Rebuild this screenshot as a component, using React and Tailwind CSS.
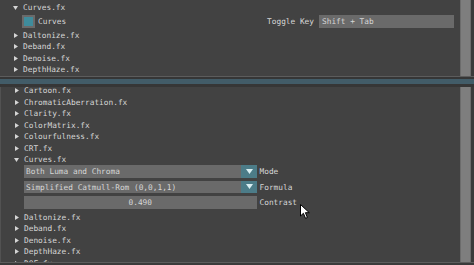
import React from "react";

const font = { fontFamily: '"DejaVu Sans Mono", "Liberation Mono", monospace' };

function Right() {
  return (
    <svg width="4" height="5" viewBox="0 0 4 5" className="shrink-0">
      <polygon points="0,0 4,2.5 0,5" fill="#d4d4d4" />
    </svg>
  );
}
function Down() {
  return (
    <svg width="5" height="4" viewBox="0 0 5 4" className="shrink-0">
      <polygon points="0,0 5,0 2.5,4" fill="#d4d4d4" />
    </svg>
  );
}

function Row({ label, open }) {
  return (
    <div className="h-[11.5px] shrink-0 flex items-center pl-[13px]">
      <div className="w-[5px] flex justify-center relative top-[0.5px]">{open ? <Down /> : <Right />}</div>
      <span className="ml-[5px] leading-none relative top-[1px]">{label}</span>
    </div>
  );
}

function Combo({ text, label }) {
  return (
    <div className="flex items-center h-[12.5px] shrink-0 pl-[22.5px]">
      <div className="w-[233.5px] h-full bg-[#6a6a6a] flex items-center">
        <span className="flex-1 pl-[2.5px] leading-none relative top-[1px]">{text}</span>
        <div className="w-[16px] h-full bg-[#4c7c88] flex items-center justify-center">
          <svg width="7" height="5" viewBox="0 0 7 5">
            <polygon points="0,0 7,0 3.5,5" fill="#d9eef2" />
          </svg>
        </div>
      </div>
      <span className="ml-[2.5px] leading-none relative top-[1px]">{label}</span>
    </div>
  );
}

function Scroll() {
  return (
    <div className="w-[14px] shrink-0 flex">
      <div className="w-[11px] h-full bg-[#7e7e7e] border-x border-[#6c6c6c]" />
      <div className="w-[3px] h-full bg-[#3a3a3a]" />
    </div>
  );
}

export default function App() {
  return (
    <div
      className="relative w-[474px] h-[265px] bg-[#3a3a3a] overflow-hidden flex flex-col text-[7.8px] text-[#d6d6d6]"
      style={font}
    >
      {/* top panel */}
      <div className="h-[76px] flex shrink-0">
        <div className="flex-1 bg-[#424242] overflow-hidden flex flex-col pt-[1px]">
          <div className="h-[12px] shrink-0 flex items-center pl-[13px]">
            <div className="w-[5px] flex justify-center relative top-[0.5px]"><Down /></div>
            <span className="ml-[5px] leading-none relative top-[1px]">Curves.fx</span>
          </div>
          <div className="mt-[1px] h-[14px] shrink-0 flex items-center pl-[22px] pr-[6px]">
            <div className="w-[13px] h-[13px] bg-[#6a6a6a] flex items-center justify-center">
              <div className="w-[9px] h-[9px] bg-[#3f8c9c]" />
            </div>
            <span className="ml-[3px] leading-none relative top-[1px]">Curves</span>
            <span className="ml-auto leading-none relative top-[1px]">Toggle Key</span>
            <div className="ml-[5px] w-[135px] h-[13px] bg-[#6a6a6a] flex items-center pl-[3px]">
              <span className="leading-none relative top-[1px]">Shift + Tab</span>
            </div>
          </div>
          <div className="mt-[1px]" />
          <Row label="Daltonize.fx" />
          <Row label="Deband.fx" />
          <Row label="Denoise.fx" />
          <Row label="DepthHaze.fx" />
        </div>
        <Scroll />
      </div>

      {/* splitter */}
      <div className="h-[1px] bg-[#5c5c5c] shrink-0" />
      <div className="h-[2px] bg-[#363636] shrink-0" />
      <div className="h-[5px] bg-[#425c68] shrink-0" />
      <div className="h-[3px] bg-[#363636] shrink-0" />

      {/* bottom panel */}
      <div className="h-[175px] flex shrink-0">
        <div className="flex-1 bg-[#424242] overflow-hidden border-l border-[#525252]">
          <div className="flex flex-col mt-[-2.5px]">
            <Row label="Cartoon.fx" />
            <Row label="ChromaticAberration.fx" />
            <Row label="Clarity.fx" />
            <Row label="ColorMatrix.fx" />
            <Row label="Colourfulness.fx" />
            <Row label="CRT.fx" />
            <Row label="Curves.fx" open />
            <Combo text="Both Luma and Chroma" label="Mode" />
            <div className="mt-[3px]" />
            <Combo text="Simplified Catmull-Rom (0,0,1,1)" label="Formula" />
            <div className="mt-[3px]" />
            <div className="flex items-center h-[12.5px] shrink-0 pl-[22.5px]">
              <div className="w-[233.5px] h-full bg-[#6a6a6a] flex items-center justify-center">
                <span className="leading-none relative top-[1px]">0.490</span>
              </div>
              <span className="ml-[2.5px] leading-none relative top-[1px]">Contrast</span>
            </div>
            <div className="mt-[2.5px]" />
            <Row label="Daltonize.fx" />
            <Row label="Deband.fx" />
            <Row label="Denoise.fx" />
            <Row label="DepthHaze.fx" />
            <Row label="DOF.fx" />
          </div>
        </div>
        <Scroll />
      </div>
      <div className="h-[1px] bg-[#5c5c5c] shrink-0" />

      {/* mouse cursor */}
      <svg
        className="absolute left-[300px] top-[204px]"
        width="11"
        height="16"
        viewBox="0 0 11 16"
      >
        <path
          d="M0.5 0.5 L0.5 12 L3.4 9.3 L5.5 14.3 L7.4 13.5 L5.4 8.7 L9.3 8.7 Z"
          fill="#ffffff"
          stroke="#000000"
          strokeWidth="1"
          strokeLinejoin="round"
        />
      </svg>
    </div>
  );
}
